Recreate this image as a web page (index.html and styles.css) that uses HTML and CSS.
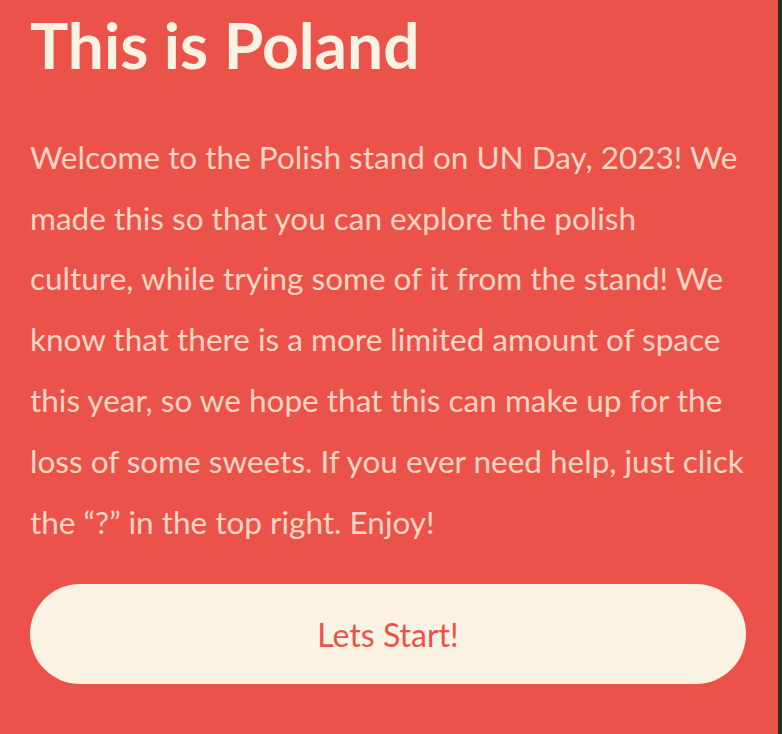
FILE: index.html
```html
<!DOCTYPE html>
<html lang="en">
<head>
<meta charset="utf-8">
<title>This is Poland</title>
<link rel="stylesheet" href="styles.css">
</head>
<body>
<main class="page">
  <h1 class="title">This is Poland</h1>
  <p class="intro">Welcome to the Polish stand on UN Day, 2023! We made this so that you can explore the polish culture, while trying some of it from the stand! We know that there is a more limited amount of space this year, so we hope that this can make up for the loss of some sweets. If you ever need help, just click the “?” in the top right. Enjoy!</p>
  <button class="start">Lets Start!</button>
</main>
</body>
</html>
```

FILE: styles.css
```css
html, body {
  margin: 0;
  padding: 0;
  height: 100%;
}
body {
  background: #2a2a2a;
  font-family: Lato, "Open Sans", sans-serif;
  overflow: hidden;
}
.page {
  box-sizing: border-box;
  margin-right: 4px;
  min-height: 100%;
  background: #eb534a;
  padding: 7px 32px 0 30px;
  display: flex;
  flex-direction: column;
}
.title {
  margin: 0;
  font-size: 64px;
  font-weight: 700;
  line-height: 1.2;
  color: #faf3e3;
}
.intro {
  margin: 43px 0 0;
  font-size: 31.5px;
  line-height: 60.8px;
  color: #fdd5c5;
}
.start {
  margin-top: 32px;
  height: 100px;
  border: none;
  border-radius: 50px;
  background: #faf3e3;
  color: #eb534a;
  font-family: Lato, "Open Sans", sans-serif;
  font-size: 32px;
  cursor: pointer;
}
```
